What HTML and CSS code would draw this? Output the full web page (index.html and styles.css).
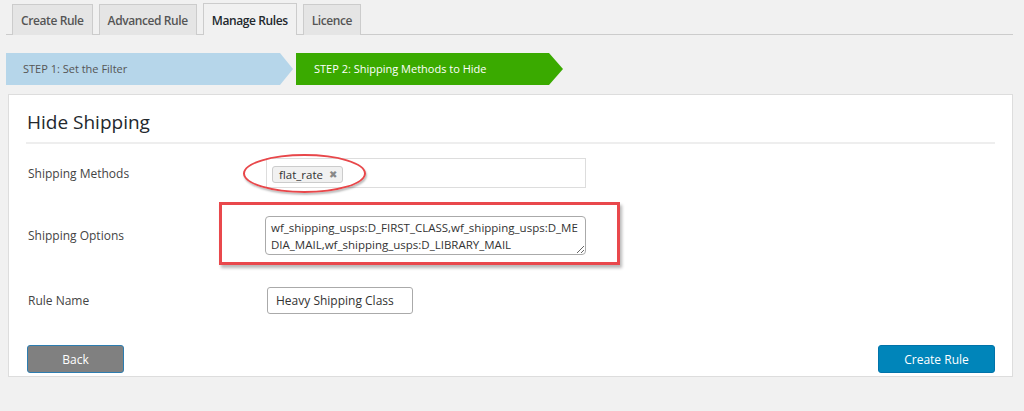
FILE: index.html
```html
<!DOCTYPE html>
<html lang="en">
<head>
<meta charset="utf-8">
<title>Manage Rules</title>
<link rel="stylesheet" href="styles.css">
</head>
<body>
<div class="wrap">
  <nav class="tabs">
    <a class="tab">Create Rule</a>
    <a class="tab">Advanced Rule</a>
    <a class="tab active">Manage Rules</a>
    <a class="tab">Licence</a>
  </nav>

  <div class="steps">
    <div class="step step-one">STEP 1: Set the Filter</div>
    <div class="step step-two">STEP 2: Shipping Methods to Hide</div>
  </div>

  <section class="panel">
    <h2 class="panel-title">Hide Shipping</h2>

    <div class="form">
      <div class="row row-methods">
        <label class="label">Shipping Methods</label>
        <div class="control">
          <div class="select-box">
            <span class="tag">flat_rate <span class="tag-x">&#x2716;</span></span>
            <span class="ring"></span>
          </div>
        </div>
      </div>

      <div class="row row-options">
        <label class="label">Shipping Options</label>
        <div class="control">
          <div class="area-wrap">
            <textarea class="area">wf_shipping_usps:D_FIRST_CLASS,wf_shipping_usps:D_MEDIA_MAIL,wf_shipping_usps:D_LIBRARY_MAIL</textarea>
            <span class="frame"></span>
          </div>
        </div>
      </div>

      <div class="row row-name">
        <label class="label">Rule Name</label>
        <div class="control">
          <input class="input" type="text" value="Heavy Shipping Class">
        </div>
      </div>
    </div>

    <div class="actions">
      <button class="btn btn-back">Back</button>
      <button class="btn btn-primary">Create Rule</button>
    </div>
  </section>
</div>
</body>
</html>
```

FILE: styles.css
```css
* { box-sizing: border-box; }

body {
  margin: 0;
  background: #f1f1f1;
  font-family: "Open Sans", "Noto Sans", sans-serif;
  font-size: 12px;
  color: #444;
}

.wrap {
  padding: 4px 11px 0 6px;
}

/* tabs */
.tabs {
  display: flex;
  gap: 6px;
  padding-left: 6px;
  border-bottom: 1px solid #ccc;
  height: 31px;
}

.tab {
  display: block;
  height: 31px;
  padding: 0 8px;
  line-height: 31px;
  background: #e5e5e5;
  border: 1px solid #ccc;
  border-bottom: none;
  color: #555;
  font-weight: 600;
  font-size: 12px;
  letter-spacing: -0.4px;
}

.tab.active {
  background: #f1f1f1;
  color: #23282d;
  height: 32px;
  margin-top: -1px;
  padding-top: 1px;
}

/* steps */
.steps {
  display: flex;
  gap: 3px;
  margin-top: 18px;
  height: 32px;
}

.step {
  height: 32px;
  line-height: 32px;
  font-size: 11px;
}

.step-one {
  width: 287px;
  padding-left: 17px;
  background: #b6d6ea;
  color: #555;
  clip-path: polygon(0 0, calc(100% - 13px) 0, 100% 50%, calc(100% - 13px) 100%, 0 100%);
}

.step-two {
  width: 267px;
  padding-left: 18px;
  background: #3aaa00;
  color: #fff;
  clip-path: polygon(0 0, calc(100% - 14px) 0, 100% 50%, calc(100% - 14px) 100%, 0 100%);
}

/* panel */
.panel {
  margin: 9px 0 0 2px;
  background: #fff;
  border: 1px solid #ddd;
  padding: 13px 17px 4px 17px;
  height: 283px;
}

.panel-title {
  margin: 0;
  font-weight: 400;
  font-size: 19px;
  line-height: 28px;
  color: #23282d;
  padding: 0 0 6px 1px;
  border-bottom: 2px solid #eee;
}

.form {
  display: grid;
  grid-template-columns: 240px 1fr;
  row-gap: 28px;
  margin-top: 14px;
}

.row {
  display: contents;
}

.label {
  align-self: center;
  padding-left: 2px;
  color: #444;
  font-size: 12px;
}

.control {
  align-self: center;
}

.row-name .label,
.row-name .control { margin-top: 4px; }

/* multi select */
.select-box {
  position: relative;
  width: 320px;
  height: 30px;
  border: 1px solid #ddd;
  background: #fff;
  padding: 7px 0 0 5px;
}

.tag {
  display: inline-flex;
  align-items: center;
  gap: 6px;
  height: 17px;
  padding: 0 5px 0 6px;
  background: #f1f1f1;
  border: 1px solid #ccc;
  border-radius: 3px;
  color: #333;
  font-size: 11.5px;
  line-height: 15px;
}

.tag-x {
  color: #888;
  font-size: 10px;
}

.ring {
  position: absolute;
  left: -24px;
  top: -5px;
  width: 123px;
  height: 39px;
  border: 2.5px solid #e8474a;
  border-radius: 50%;
  box-shadow: 1px 2px 2px rgba(0, 0, 0, 0.25);
  pointer-events: none;
}

/* textarea */
.area-wrap {
  position: relative;
  width: 321px;
  margin-left: -1px;
}

.area {
  display: block;
  width: 321px;
  height: 39px;
  padding: 2px 4px 2px 5px;
  border: 1px solid #aaa;
  border-radius: 4px;
  font-family: inherit;
  font-size: 11.5px;
  line-height: 17px;
  color: #333;
  word-break: break-all;
  overflow: hidden;
  resize: vertical;
}

.frame {
  position: absolute;
  left: -46px;
  top: -14px;
  width: 401px;
  height: 63px;
  border: 3px solid #e9484c;
  box-shadow: 2px 3px 3px rgba(0, 0, 0, 0.28);
  pointer-events: none;
}

/* input */
.input {
  display: block;
  width: 146px;
  height: 27px;
  margin-left: 1px;
  padding: 0 8px;
  border: 1px solid #aaa;
  border-radius: 3px;
  font-family: inherit;
  font-size: 12px;
  color: #333;
}

/* actions */
.actions {
  display: flex;
  justify-content: space-between;
  margin-top: 31px;
  padding-left: 1px;
}

.btn {
  height: 28px;
  border-radius: 3px;
  font-family: inherit;
  font-size: 12px;
  color: #fff;
  cursor: pointer;
}

.btn-back {
  width: 97px;
  background: #808080;
  border: 1px solid #2d7db0;
}

.btn-primary {
  width: 117px;
  background: #0085ba;
  border: 1px solid #0073aa;
}
```
